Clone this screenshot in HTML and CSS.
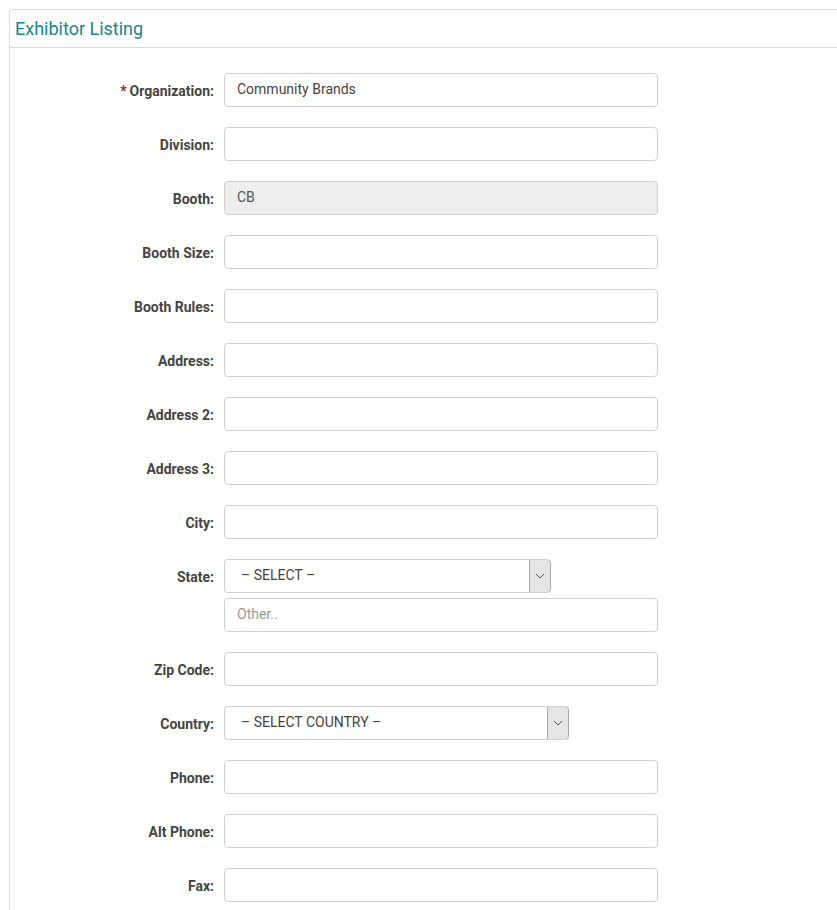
FILE: index.html
```html
<!DOCTYPE html>
<html>
<head>
<meta charset="utf-8">
<link rel="stylesheet" href="styles.css">
</head>
<body>
<div class="panel">
  <div class="panel-heading"><h3 class="panel-title">Exhibitor Listing</h3></div>
  <div class="panel-body">
    <form class="form-grid">
      <label class="form-label"><span class="req">*</span>Organization:</label>
      <input class="form-input" type="text" value="Community Brands">

      <label class="form-label">Division:</label>
      <input class="form-input" type="text">

      <label class="form-label">Booth:</label>
      <input class="form-input disabled" type="text" value="CB" disabled>

      <label class="form-label">Booth Size:</label>
      <input class="form-input" type="text">

      <label class="form-label">Booth Rules:</label>
      <input class="form-input" type="text">

      <label class="form-label">Address:</label>
      <input class="form-input" type="text">

      <label class="form-label">Address 2:</label>
      <input class="form-input" type="text">

      <label class="form-label">Address 3:</label>
      <input class="form-input" type="text">

      <label class="form-label">City:</label>
      <input class="form-input" type="text">

      <label class="form-label state-label">State:</label>
      <div class="stack">
        <div class="select-box state-select">
          <span class="select-text">– SELECT –</span>
          <span class="select-arrow"><svg width="10" height="6" viewBox="0 0 10 6"><path d="M1 1 L5 5 L9 1" fill="none" stroke="#555" stroke-width="1"/></svg></span>
        </div>
        <input class="form-input" type="text" placeholder="Other..">
      </div>

      <label class="form-label">Zip Code:</label>
      <input class="form-input" type="text">

      <label class="form-label">Country:</label>
      <div class="select-box country-select">
        <span class="select-text">– SELECT COUNTRY –</span>
        <span class="select-arrow"><svg width="10" height="6" viewBox="0 0 10 6"><path d="M1 1 L5 5 L9 1" fill="none" stroke="#555" stroke-width="1"/></svg></span>
      </div>

      <label class="form-label">Phone:</label>
      <input class="form-input" type="text">

      <label class="form-label">Alt Phone:</label>
      <input class="form-input" type="text">

      <label class="form-label">Fax:</label>
      <input class="form-input" type="text">
    </form>
  </div>
</div>
</body>
</html>
```
FILE: styles.css
```css
html, body {
  margin: 0;
  padding: 0;
  overflow: hidden;
  background: #fff;
  font-family: Roboto, "Liberation Sans", sans-serif;
  color: #444;
}
body {
  padding: 9px 0 0 9px;
}
.panel {
  border: 1px solid #dcdcdc;
  border-right: none;
  border-radius: 4px 0 0 0;
  min-height: 920px;
}
.panel-heading {
  height: 37px;
  border-bottom: 1px solid #dcdcdc;
  display: flex;
  align-items: center;
  padding-left: 5px;
}
.panel-title {
  margin: 0;
  font-size: 18px;
  font-weight: 400;
  color: #17868d;
  line-height: 1;
  padding-top: 1px;
}
.panel-body {
  padding-top: 25px;
}
.form-grid {
  display: grid;
  grid-template-columns: 204px 434px;
  column-gap: 10px;
  row-gap: 20px;
  margin: 0;
}
.form-label {
  box-sizing: border-box;
  text-align: right;
  font-weight: 700;
  font-size: 14px;
  color: #444;
  line-height: 34px;
  height: 34px;
  padding-top: 1px;
}
.req {
  color: #a61c1c;
  margin-right: 3px;
}
.form-input {
  box-sizing: border-box;
  width: 434px;
  height: 34px;
  border: 1px solid #d0d0d0;
  border-radius: 4px;
  padding: 0 12px 2px;
  font-family: Roboto, "Liberation Sans", sans-serif;
  font-size: 14px;
  color: #444;
  background: #fff;
  margin: 0;
  outline: none;
}
.form-input::placeholder {
  color: #999;
}
.form-input.disabled {
  background: #eeeeee;
  color: #555;
  -webkit-text-fill-color: #555;
  opacity: 1;
}
.stack {
  display: flex;
  flex-direction: column;
  gap: 5px;
}
.select-box {
  box-sizing: border-box;
  height: 34px;
  display: flex;
  border: 1px solid #d0d0d0;
  border-right: none;
  border-radius: 4px;
  overflow: hidden;
  background: #fff;
}
.state-select { width: 327px; }
.country-select { width: 345px; }
.select-text {
  flex: 1;
  font-size: 14px;
  color: #444;
  line-height: 30px;
  padding-left: 16px;
}
.select-arrow {
  box-sizing: border-box;
  width: 22px;
  margin-top: -1px;
  margin-bottom: -1px;
  background: #e5e5e5;
  border: 1px solid #a8a8a8;
  border-radius: 0 4px 4px 0;
  display: flex;
  align-items: center;
  justify-content: center;
}
```
